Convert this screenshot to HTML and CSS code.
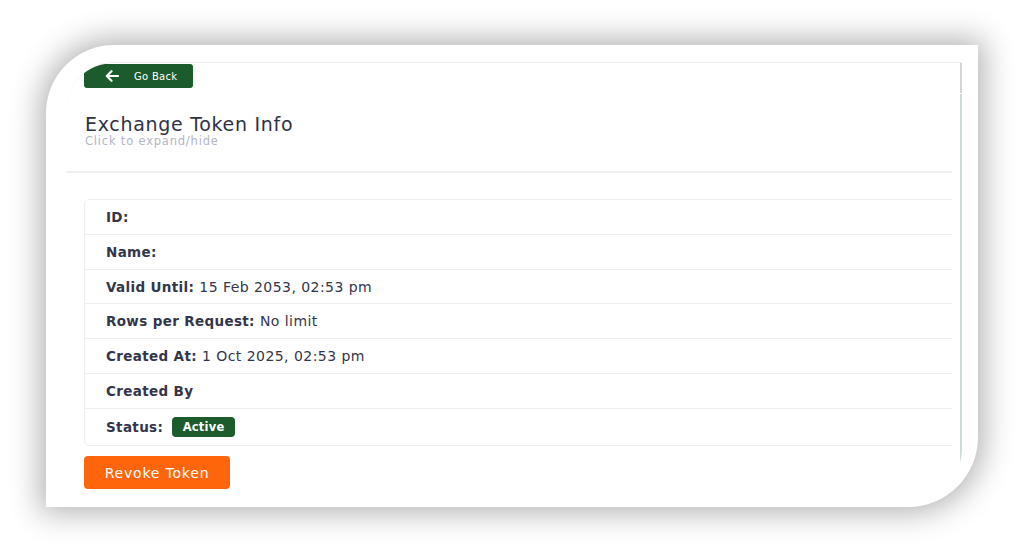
FILE: index.html
```html
<!DOCTYPE html>
<html lang="en">
<head>
<meta charset="utf-8">
<title>Exchange Token Info</title>
<link rel="stylesheet" href="styles.css">
</head>
<body>
<div class="frame">
  <div class="panel">
    <div class="content">
      <button class="back-btn" type="button">
        <svg class="back-icon" width="14" height="12" viewBox="0 0 14 12" aria-hidden="true">
          <path d="M13 6H2M6.5 1.2L1.8 6l4.7 4.8" fill="none" stroke="#fff" stroke-width="2.2" stroke-linecap="round" stroke-linejoin="round"/>
        </svg>
        <span>Go Back</span>
      </button>
      <div class="card-head">
        <h2 class="title">Exchange Token Info</h2>
        <div class="subtitle">Click to expand/hide</div>
      </div>
      <div class="body">
        <ul class="list">
          <li class="row"><b>ID:</b></li>
          <li class="row"><b>Name:</b></li>
          <li class="row row-short"><b>Valid Until:</b><span class="val">15 Feb 2053, 02:53 pm</span></li>
          <li class="row"><b>Rows per Request:</b><span class="val">No limit</span></li>
          <li class="row"><b>Created At:</b><span class="val">1 Oct 2025, 02:53 pm</span></li>
          <li class="row"><b>Created By</b></li>
          <li class="row row-last"><b>Status:</b><span class="badge">Active</span></li>
        </ul>
        <button class="revoke-btn" type="button">Revoke Token</button>
      </div>
    </div>
    <div class="scrollbar"><div class="thumb"></div></div>
  </div>
</div>
</body>
</html>
```
FILE: styles.css
```css
* { box-sizing: border-box; }
html, body { margin: 0; background: #fff; }
body {
  padding: 45px 46px 46px 46px;
  font-family: "DejaVu Sans", "Noto Sans", sans-serif;
  color: #33364a;
}
.frame {
  height: 462px;
  background: #fff;
  border-radius: 68px 0 70px 0;
  box-shadow: 0 0 30px 6px rgba(0,0,0,0.3);
  padding: 17px 16px 7px 20px;
}
.panel {
  height: 100%;
  display: flex;
  border-top: 1px solid #eeeef4;
  border-radius: 48px 0 52px 0;
  overflow: hidden;
}
.content {
  flex: 1;
  min-width: 0;
  overflow: hidden;
  padding: 1px 0 0 0;
}
.scrollbar {
  width: 10px;
  display: flex;
  justify-content: flex-end;
}
.thumb {
  width: 2px;
  height: 100%;
  background: linear-gradient(#d4d4d6 0, #d4d4d6 30px, #ffffff 30px, #ffffff 31px, #c9dbd2 31px);
}
.back-btn {
  display: flex;
  align-items: center;
  gap: 15px;
  margin-left: 18px;
  width: 109px;
  height: 24px;
  padding: 0 0 0 21px;
  border: 0;
  border-radius: 3px;
  background: #1b5b2c;
  color: #fff;
  font-family: inherit;
  font-size: 10px;
  font-weight: 400;
  letter-spacing: 0.3px;
}
.back-icon { flex: none; }
.card-head {
  padding: 26px 18px 23px 19px;
  border-bottom: 2px solid #eef0f4;
}
.title {
  margin: 0;
  font-size: 19px;
  font-weight: 500;
  line-height: 20px;
  letter-spacing: 0.7px;
  color: #2e3244;
}
.subtitle {
  font-size: 11.5px;
  line-height: 14px;
  letter-spacing: 0.8px;
  color: #b3b6c8;
}
.body {
  padding: 26px 0 0 18px;
}
.list {
  list-style: none;
  margin: 0;
  padding: 0;
  width: 900px;
  border: 1px solid #eceef3;
  border-radius: 5px;
}
.row {
  height: 35px;
  display: flex;
  align-items: center;
  padding-left: 21px;
  border-bottom: 1px solid #eceef3;
  font-size: 13.5px;
  letter-spacing: 0.35px;
  color: #33364a;
}
.row b { font-weight: 700; }
.row-short { height: 34px; }
.val {
  margin-left: 5px;
  font-size: 14px;
  letter-spacing: 0.45px;
}
.row-last { border-bottom: 0; height: 36px; }
.badge {
  margin-left: 9px;
  background: #1b5b2c;
  color: #fff;
  font-size: 11.5px;
  font-weight: 700;
  padding: 0 10.5px;
  height: 20px;
  line-height: 20px;
  border-radius: 4px;
  letter-spacing: 0.2px;
}
.revoke-btn {
  display: block;
  margin-top: 10px;
  width: 146px;
  height: 33px;
  border: 0;
  border-radius: 4px;
  background: #ff650a;
  color: #fff;
  font-family: inherit;
  font-size: 14px;
  letter-spacing: 0.8px;
}
```
